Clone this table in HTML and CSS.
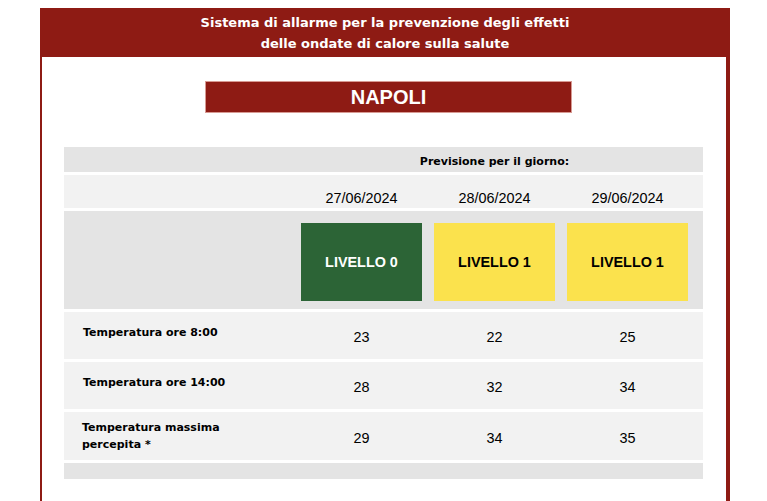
FILE: index.html
```html
<!DOCTYPE html>
<html lang="it">
<head>
<meta charset="utf-8">
<title>Ondate di calore - Napoli</title>
<link rel="stylesheet" href="styles.css">
</head>
<body>
<div class="page">
  <div class="banner">
    <div>Sistema di allarme per la prevenzione degli effetti</div>
    <div>delle ondate di calore sulla salute</div>
  </div>
  <div class="content">
    <div class="city">NAPOLI</div>
    <div class="table">
      <div class="row row-title">
        <div class="title">Previsione per il giorno:</div>
      </div>
      <div class="row row-dates">
        <div class="label"></div>
        <div class="date">27/06/2024</div>
        <div class="date">28/06/2024</div>
        <div class="date">29/06/2024</div>
      </div>
      <div class="row row-levels">
        <div class="label"></div>
        <div class="level level-0">LIVELLO 0</div>
        <div class="level level-1">LIVELLO 1</div>
        <div class="level level-1">LIVELLO 1</div>
      </div>
      <div class="row row-data">
        <div class="label label-raised">Temperatura ore 8:00</div>
        <div class="num">23</div>
        <div class="num">22</div>
        <div class="num">25</div>
      </div>
      <div class="row row-data">
        <div class="label label-raised">Temperatura ore 14:00</div>
        <div class="num">28</div>
        <div class="num">32</div>
        <div class="num">34</div>
      </div>
      <div class="row row-data row-tall">
        <div class="label">Temperatura massima<br>percepita *</div>
        <div class="num">29</div>
        <div class="num">34</div>
        <div class="num">35</div>
      </div>
      <div class="row row-foot"></div>
    </div>
  </div>
</div>
</body>
</html>
```

FILE: styles.css
```css
html, body {
  margin: 0;
  padding: 0;
  background: #ffffff;
}

body {
  padding: 8px 0 0 40px;
  font-family: "Liberation Sans", Arial, sans-serif;
  color: #000;
}

.page {
  width: 690px;
}

.banner {
  background: #8e1b14;
  color: #ffffff;
  font-family: "DejaVu Sans", Verdana, sans-serif;
  font-weight: bold;
  font-size: 13px;
  line-height: 21px;
  text-align: center;
  padding: 4px 0 3px;
}

.content {
  border-left: 2px solid #8e1b14;
  border-right: 4px solid #8e1b14;
  box-sizing: border-box;
  height: 444px;
  padding-top: 24px;
}

.city {
  width: 365px;
  height: 30px;
  margin-left: 163px;
  background: #8e1b14;
  border: 1px solid #d79a93;
  color: #ffffff;
  font-weight: bold;
  font-size: 20px;
  line-height: 30px;
  text-align: center;
}

.table {
  margin: 34px 0 0 22px;
  width: 639px;
  display: flex;
  flex-direction: column;
  gap: 3px;
}

.row {
  display: grid;
  grid-template-columns: 231px 133px 133px 133px;
  background: #f2f2f2;
}

.row-title {
  background: #e4e4e4;
  height: 25px;
  display: flex;
  align-items: center;
  justify-content: center;
  padding-left: 231px;
  padding-right: 9px;
  box-sizing: border-box;
}

.title {
  font-family: "DejaVu Sans", Verdana, sans-serif;
  font-weight: bold;
  font-size: 11px;
  padding-top: 4px;
}

.row-dates {
  height: 33px;
  align-items: end;
}

.date {
  text-align: center;
  font-size: 14.4px;
  line-height: 16px;
  padding-bottom: 2px;
}

.row-levels {
  background: #e4e4e4;
  padding: 12px 0 8px;
}

.level {
  margin: 0 6px;
  height: 78px;
  display: flex;
  align-items: center;
  justify-content: center;
  font-weight: bold;
  font-size: 14.4px;
}

.level-0 {
  background: #2c6436;
  color: #ffffff;
}

.level-1 {
  background: #fbe24d;
  color: #000000;
}

.row-data {
  height: 47px;
  align-items: center;
}

.row-tall {
  height: 48px;
}

.label {
  padding-left: 18px;
  font-family: "DejaVu Sans", Verdana, sans-serif;
  font-weight: bold;
  font-size: 11px;
  line-height: 17px;
}

.label-raised {
  padding-left: 19px;
  padding-bottom: 6px;
}

.num {
  text-align: center;
  font-size: 14.4px;
  padding-top: 3px;
}

.row-foot {
  background: #e4e4e4;
  height: 16px;
}
```
